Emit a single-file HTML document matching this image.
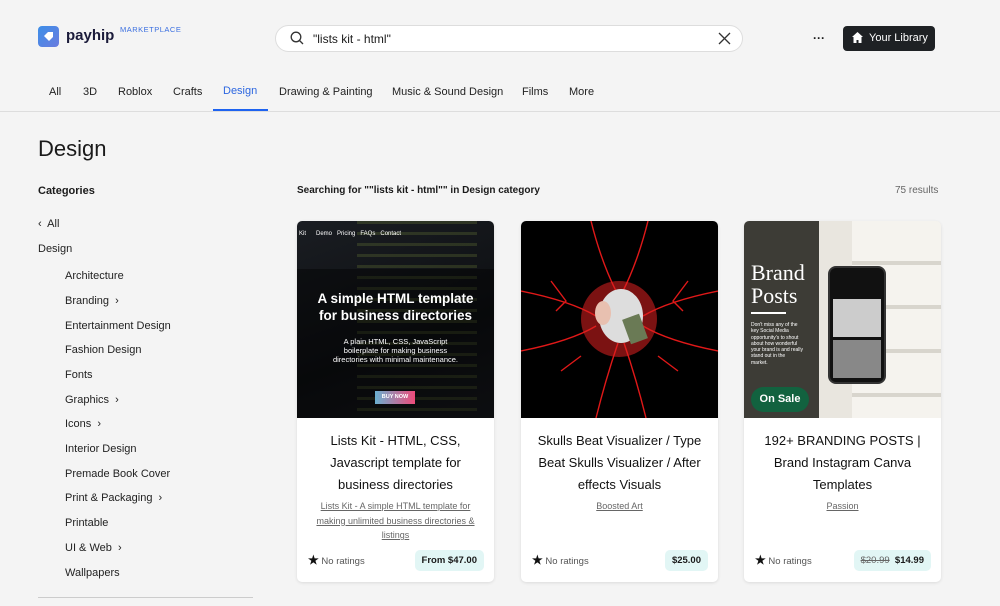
<!DOCTYPE html>
<html><head><style>
*{margin:0;padding:0;box-sizing:border-box}
body{width:1000px;height:606px;overflow:hidden;background:#f4f4f4;font-family:"Liberation Sans",sans-serif;color:#1a1a1a;position:relative}
.a{position:absolute}
.nav span{position:absolute;top:86px;font-size:11px;color:#222}
.side div{position:absolute;font-size:11px;color:#222;margin-top:1px}
.card{position:absolute;top:221px;width:197px;height:361px;background:#fff;border-radius:5px;box-shadow:0 1px 3px rgba(0,0,0,.1);overflow:hidden}
.img{height:197px;position:relative;overflow:hidden}
.t{position:absolute;top:209px;left:8px;right:8px;text-align:center;font-size:13px;line-height:22px;color:#111}
.s{text-align:center;font-size:9px;line-height:14.5px;color:#666;text-decoration:underline}
.r{position:absolute;bottom:15px;left:11px;font-size:9.5px;color:#555}
.r b{font-size:12px;color:#111}
.p{position:absolute;bottom:11px;right:10px;background:#e2f6f5;border-radius:5px;padding:5px 7px;font-size:9.5px;font-weight:bold}
</style></head><body>
<div class="a" style="left:38px;top:26px;width:21px;height:21px;border-radius:4px;background:linear-gradient(135deg,#3c8fe8,#6a7bdf)"><svg width="21" height="21"><path d="M6 10l4-4 5 0 0 5-4 4z" fill="#fff"/></svg></div>
<div class="a" style="left:66px;top:27px;font-size:15px;font-weight:bold;color:#1b1b3a">payhip</div>
<div class="a" style="left:120px;top:25px;font-size:7.5px;color:#3a6fe0;letter-spacing:.5px">MARKETPLACE</div>
<div class="a" style="left:275px;top:25px;width:468px;height:27px;background:#fff;border:1px solid #ddd;border-radius:14px"></div>
<svg class="a" style="left:290px;top:31px" width="14" height="14"><circle cx="6" cy="6" r="4.8" fill="none" stroke="#333" stroke-width="1.3"/><path d="M9.5 9.5l3.5 3.5" stroke="#333" stroke-width="1.3"/></svg>
<div class="a" style="left:313px;top:32px;font-size:12px">"lists kit - html"</div>
<svg class="a" style="left:718px;top:32px" width="13" height="13"><path d="M1 1l11 11M12 1L1 12" stroke="#333" stroke-width="1.3"/></svg>
<div class="a" style="left:813px;top:31px;font-size:12px;font-weight:bold">···</div>
<div class="a" style="left:843px;top:26px;width:92px;height:25px;background:#1e2124;border-radius:4px;color:#fff;font-size:11px;padding:6px 0 0 26px">Your Library</div>
<svg class="a" style="left:852px;top:32px" width="11" height="11"><path d="M5.5 0L0 5h1.5v6h3V8h2v3h3V5H11z" fill="#fff"/></svg>
<div class="nav">
<span style="left:49px">All</span><span style="left:83px">3D</span><span style="left:118px">Roblox</span><span style="left:173px">Crafts</span><span style="left:223px;color:#2c66e0;top:85px">Design</span><span style="left:279px">Drawing &amp; Painting</span><span style="left:392px">Music &amp; Sound Design</span><span style="left:522px">Films</span><span style="left:569px">More</span>
</div>
<div class="a" style="left:213px;top:109px;width:55px;height:2px;background:#1e63f0"></div>
<div class="a" style="left:0;top:111px;width:1000px;height:1px;background:#ddd"></div>
<div class="a" style="left:38px;top:136px;font-size:22px">Design</div>
<div class="a" style="left:38px;top:185px;font-size:11px;font-weight:bold">Categories</div>
<div class="side">
<div style="left:38px;top:217px">‹&nbsp; All</div>
<div style="left:38px;top:242px">Design</div>
<div style="left:65px;top:269px">Architecture</div>
<div style="left:65px;top:294px">Branding &nbsp;›</div>
<div style="left:65px;top:319px">Entertainment Design</div>
<div style="left:65px;top:343px">Fashion Design</div>
<div style="left:65px;top:368px">Fonts</div>
<div style="left:65px;top:393px">Graphics &nbsp;›</div>
<div style="left:65px;top:417px">Icons &nbsp;›</div>
<div style="left:65px;top:442px">Interior Design</div>
<div style="left:65px;top:467px">Premade Book Cover</div>
<div style="left:65px;top:491px">Print &amp; Packaging &nbsp;›</div>
<div style="left:65px;top:516px">Printable</div>
<div style="left:65px;top:541px">UI &amp; Web &nbsp;›</div>
<div style="left:65px;top:566px">Wallpapers</div>
</div>
<div class="a" style="left:38px;top:597px;width:215px;height:1px;background:#ccc"></div>
<div class="a" style="left:297px;top:185px;font-size:10px;font-weight:bold">Searching for ""lists kit - html"" in Design category</div>
<div class="a" style="left:895px;top:185px;font-size:10px;color:#666">75 results</div>

<div class="card" style="left:297px">
<div class="img" style="background:linear-gradient(160deg,#1a1d22,#0d0f12 60%,#16181c)">
<div class="a" style="left:60px;top:0;width:120px;height:197px;background:repeating-linear-gradient(180deg,rgba(120,140,60,.25) 0 3px,transparent 3px 11px)"></div>
<div class="a" style="left:0;top:48px;width:197px;height:149px;background:rgba(0,0,0,.4)"></div>
<div class="a" style="left:2px;top:10px;font-size:6px;color:#fff">Kit &nbsp;&nbsp;&nbsp;&nbsp; Demo &nbsp; Pricing &nbsp; FAQs &nbsp; Contact</div>
<div class="a" style="left:0;right:0;top:69px;text-align:center;color:#fff;font-weight:bold;font-size:13.5px;line-height:17px">A simple HTML template<br>for business directories</div>
<div class="a" style="left:0;right:0;top:116px;text-align:center;color:#fff;font-size:7.5px;line-height:9px">A plain HTML, CSS, JavaScript<br>boilerplate for making business<br>directories with minimal maintenance.</div>
<div class="a" style="left:78px;top:170px;width:40px;height:13px;background:linear-gradient(90deg,#6ab0d0,#ee4b7a);font-size:5.5px;color:#fff;font-weight:bold;text-align:center;line-height:13px">BUY NOW</div>
</div>
<div class="t">Lists Kit - HTML, CSS,<br>Javascript template for<br>business directories<div class="s" style="margin-top:3px">Lists Kit - A simple HTML template for making unlimited business directories &amp; listings</div></div>
<div class="r"><b>★</b> No ratings</div><div class="p">From $47.00</div>
</div>

<div class="card" style="left:521px">
<div class="img" style="background:#000">
<svg class="a" style="left:0;top:0" width="197" height="197"><g stroke="#e01818" stroke-width="1.4" fill="none"><path d="M70 0q10 40 25 70M127 0q-10 40-25 70M0 70q50 10 75 25M197 70q-50 10-75 25M0 130q50-10 75-25M197 130q-50-10-75-25M75 197q10-40 22-75M125 197q-10-40-22-75"/><path d="M30 60l15 20-10 10M167 60l-15 20 10 10M40 150l20-15M157 150l-20-15"/></g><circle cx="98" cy="98" r="38" fill="#e02020" opacity=".55"/><ellipse cx="100" cy="95" rx="22" ry="27" fill="#ddd"/><rect x="105" y="95" width="18" height="26" fill="#6a7a55" transform="rotate(-20 114 108)"/><ellipse cx="82" cy="92" rx="8" ry="12" fill="#e8c0b0"/></svg>
</div>
<div class="t">Skulls Beat Visualizer / Type<br>Beat Skulls Visualizer / After<br>effects Visuals<div class="s" style="margin-top:3px">Boosted Art</div></div>
<div class="r"><b>★</b> No ratings</div><div class="p">$25.00</div>
</div>

<div class="card" style="left:744px">
<div class="img" style="background:#e9e6df">
<div class="a" style="left:0;top:0;width:75px;height:197px;background:#3d3c36"></div>
<div class="a" style="left:108px;top:0;width:89px;height:197px;background:repeating-linear-gradient(180deg,#f5f3ee 0 40px,#d8d5cd 40px 44px)"></div>
<div class="a" style="left:7px;top:40px;font-family:'Liberation Serif',serif;color:#fff;font-size:22px;line-height:23px">Brand<br>Posts</div>
<div class="a" style="left:7px;top:91px;width:35px;height:2px;background:#fff"></div>
<div class="a" style="left:7px;top:101px;font-size:5px;color:#fff;line-height:6.3px">Don't miss any of the<br>key Social Media<br>opportunity's to shout<br>about how wonderful<br>your brand is and really<br>stand out in the<br>market.</div>
<div class="a" style="left:7px;top:166px;width:58px;height:25px;border-radius:13px;background:#12623f;color:#fff;font-size:11px;font-weight:bold;text-align:center;line-height:25px">On Sale</div>
<div class="a" style="left:84px;top:45px;width:58px;height:118px;border-radius:8px;background:#111;border:2px solid #333"></div>
<div class="a" style="left:89px;top:78px;width:48px;height:38px;background:#ccc"></div>
<div class="a" style="left:89px;top:119px;width:48px;height:38px;background:#888"></div>
</div>
<div class="t">192+ BRANDING POSTS |<br>Brand Instagram Canva<br>Templates<div class="s" style="margin-top:3px">Passion</div></div>
<div class="r"><b>★</b> No ratings</div><div class="p"><span style="font-weight:normal;color:#666;text-decoration:line-through">$20.99</span>&nbsp;&nbsp;$14.99</div>
</div>
</body></html>
